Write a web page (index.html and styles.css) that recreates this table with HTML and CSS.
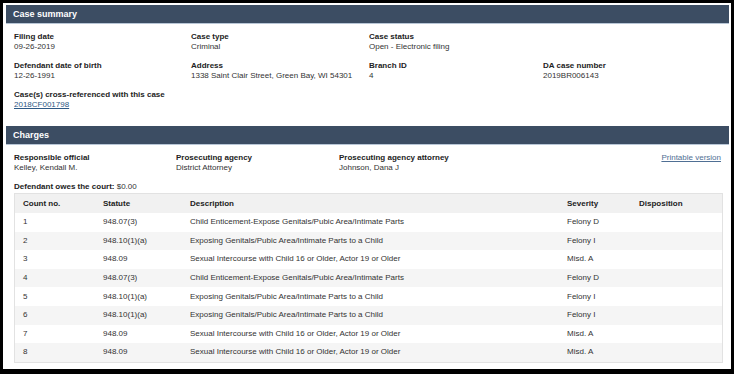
FILE: index.html
```html
<!DOCTYPE html>
<html>
<head>
<meta charset="utf-8">
<link rel="stylesheet" href="styles.css">
</head>
<body>
<div class="frame">
  <section class="panel">
    <h2 class="panel-head">Case summary</h2>
    <div class="summary-grid">
      <div class="field"><div class="label">Filing date</div><div class="value">09-26-2019</div></div>
      <div class="field"><div class="label">Case type</div><div class="value">Criminal</div></div>
      <div class="field span2"><div class="label">Case status</div><div class="value">Open - Electronic filing</div></div>
      <div class="field"><div class="label">Defendant date of birth</div><div class="value">12-26-1991</div></div>
      <div class="field"><div class="label">Address</div><div class="value">1338 Saint Clair Street, Green Bay, WI 54301</div></div>
      <div class="field"><div class="label">Branch ID</div><div class="value">4</div></div>
      <div class="field"><div class="label">DA case number</div><div class="value">2019BR006143</div></div>
      <div class="field span4"><div class="label">Case(s) cross-referenced with this case</div><div class="value"><a href="#" class="link">2018CF001798</a></div></div>
    </div>
  </section>
  <section class="panel charges">
    <h2 class="panel-head">Charges</h2>
    <div class="officials">
      <div class="field"><div class="label">Responsible official</div><div class="value">Kelley, Kendall M.</div></div>
      <div class="field"><div class="label">Prosecuting agency</div><div class="value">District Attorney</div></div>
      <div class="field"><div class="label">Prosecuting agency attorney</div><div class="value">Johnson, Dana J</div></div>
      <div class="print"><a href="#" class="link print-link">Printable version</a></div>
    </div>
    <div class="owes"><span class="label">Defendant owes the court:</span> <span class="value">$0.00</span></div>
    <table class="charges-table">
      <thead>
        <tr><th class="c-count">Count no.</th><th class="c-stat">Statute</th><th class="c-desc">Description</th><th class="c-sev">Severity</th><th class="c-disp">Disposition</th></tr>
      </thead>
      <tbody>
        <tr><td>1</td><td>948.07(3)</td><td>Child Enticement-Expose Genitals/Pubic Area/Intimate Parts</td><td>Felony D</td><td></td></tr>
        <tr><td>2</td><td>948.10(1)(a)</td><td>Exposing Genitals/Pubic Area/Intimate Parts to a Child</td><td>Felony I</td><td></td></tr>
        <tr><td>3</td><td>948.09</td><td>Sexual Intercourse with Child 16 or Older, Actor 19 or Older</td><td>Misd. A</td><td></td></tr>
        <tr><td>4</td><td>948.07(3)</td><td>Child Enticement-Expose Genitals/Pubic Area/Intimate Parts</td><td>Felony D</td><td></td></tr>
        <tr><td>5</td><td>948.10(1)(a)</td><td>Exposing Genitals/Pubic Area/Intimate Parts to a Child</td><td>Felony I</td><td></td></tr>
        <tr><td>6</td><td>948.10(1)(a)</td><td>Exposing Genitals/Pubic Area/Intimate Parts to a Child</td><td>Felony I</td><td></td></tr>
        <tr><td>7</td><td>948.09</td><td>Sexual Intercourse with Child 16 or Older, Actor 19 or Older</td><td>Misd. A</td><td></td></tr>
        <tr><td>8</td><td>948.09</td><td>Sexual Intercourse with Child 16 or Older, Actor 19 or Older</td><td>Misd. A</td><td></td></tr>
      </tbody>
    </table>
  </section>
</div>
</body>
</html>
```
FILE: styles.css
```css
html, body { margin: 0; padding: 0; background: #000; }
body {
  font-family: "Liberation Sans", Arial, sans-serif;
  font-size: 8px;
  color: #333;
}
.frame {
  box-sizing: border-box;
  width: 734px;
  height: 374px;
  margin: 0;
  border-style: solid;
  border-color: #000;
  border-width: 3px 3px 5px 3px;
  background: #fff;
  padding: 2px 2px 0 3px;
  overflow: hidden;
}
.panel-head {
  margin: 0;
  height: 18px;
  line-height: 18px;
  background: #3c4d63;
  color: #fff;
  font-size: 9px;
  font-weight: bold;
  padding: 0 7px;
  border-bottom: 1px solid #b8c6d6;
}
.summary-grid {
  display: grid;
  grid-template-columns: 177px 178px 174px 1fr;
  row-gap: 9px;
  padding: 8px 8px 16px 8px;
}
.span2 { grid-column: span 2; }
.span4 { grid-column: span 4; }
.field { line-height: 10px; }
.label { color: #222; font-weight: bold; }
.value { color: #333; }
.link { color: #2d5985; text-decoration: underline; }
.officials {
  display: grid;
  grid-template-columns: 162px 163px 1fr auto;
  padding: 8px 8px 0 8px;
  line-height: 10px;
}
.print-link { color: #4f6f94; }
.owes { padding: 9px 8px 0 8px; line-height: 10px; }
.owes .label { color: #222; }
.charges-table {
  margin: 1px 0 0 8px;
  width: 709px;
  border-collapse: collapse;
  border: 1px solid #e2e2e2;
  line-height: 10px;
}
.charges-table th {
  text-align: left;
  font-weight: bold;
  color: #222;
  background: #f1f1f1;
  height: 19px;
  padding: 0 0 0 8px;
}
.charges-table td {
  height: 18.6px;
  padding: 0 0 0 8px;
  color: #333;
}
.charges-table tbody tr:nth-child(even) td { background: #f5f5f5; }
.c-count { width: 72px; }
.c-stat { width: 79px; }
.c-desc { width: 369px; }
.c-sev { width: 64px; }
```
